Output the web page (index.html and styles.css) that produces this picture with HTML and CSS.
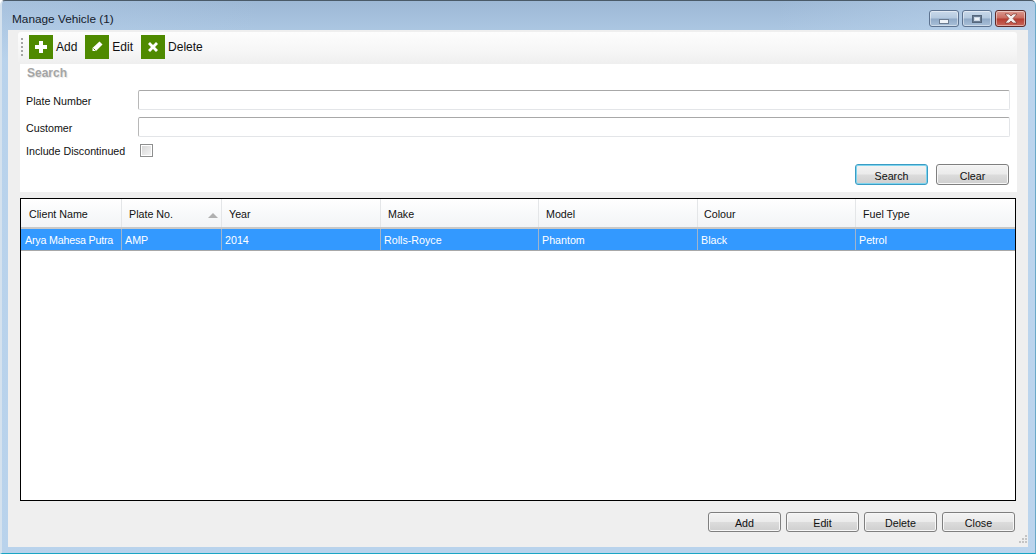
FILE: index.html
```html
<!DOCTYPE html>
<html lang="en">
<head>
<meta charset="utf-8">
<title>Manage Vehicle (1)</title>
<link rel="stylesheet" href="styles.css">
</head>
<body>
<div class="window">
  <header class="titlebar">
    <div class="title">Manage Vehicle (1)</div>
    <div class="caption">
      <button class="cap"><svg width="16" height="14" viewBox="0 0 16 14"><rect x="3.500" y="7.500" width="9" height="4" fill="#eef3f8" stroke="#6a7b90"/></svg></button>
      <button class="cap"><svg width="14" height="12" viewBox="0 0 14 12"><rect x="2.500" y="2.500" width="9" height="7" fill="#cdd9e6" stroke="#55677c"/><rect x="3.500" y="3.500" width="7" height="5" fill="none" stroke="#6a7c92"/><rect x="5" y="5" width="4" height="2" fill="#eef3f8"/></svg></button>
      <button class="cap close"><svg width="18" height="11" viewBox="0 0 18 11"><path d="M3 1h4l2 2 2-2h4l-4 4.500 4 4.500h-4l-2-2-2 2H3l4-4.500z" fill="#f4efee" stroke="#6e2a22" stroke-width=".6"/></svg></button>
    </div>
  </header>
  <div class="client">
    <div class="toolbar">
      <div class="grip"></div>
      <div class="tool"><span class="ticon"><svg width="14" height="14" viewBox="0 0 14 14"><path d="M5 1h4v4h4v4H9v4H5V9H1V5h4z" fill="#fff"/></svg></span>Add</div>
      <div class="tool"><span class="ticon"><svg width="14" height="14" viewBox="0 0 14 14"><path d="M9.500 1.500l3 3L6 11H2.500V8z" fill="#fff"/><path d="M3.500 8.500l2 2" stroke="#4f8a00"/></svg></span>Edit</div>
      <div class="tool"><span class="ticon"><svg width="14" height="14" viewBox="0 0 14 14"><path d="M4 2l3 3 3-3 2 2-3 3 3 3-2 2-3-3-3 3-2-2 3-3-3-3z" fill="#fff"/></svg></span>Delete</div>
    </div>
    <section class="search">
      <div class="legend">Search</div>
      <div class="row row-plate"><label class="lbl">Plate Number</label><div class="input"></div></div>
      <div class="row row-cust"><label class="lbl">Customer</label><div class="input"></div></div>
      <div class="row row-chk"><label class="lbl">Include Discontinued</label><span class="check"></span></div>
      <div class="search-actions">
        <button class="btn focus">Search</button>
        <button class="btn">Clear</button>
      </div>
    </section>
    <section class="grid">
      <div class="thead">
        <div class="th c1">Client Name</div>
        <div class="th c2">Plate No.<i class="sort"></i></div>
        <div class="th c3">Year</div>
        <div class="th c4">Make</div>
        <div class="th c5">Model</div>
        <div class="th c6">Colour</div>
        <div class="th c7">Fuel Type</div>
      </div>
      <div class="tr">
        <div class="td c1">Arya Mahesa Putra</div>
        <div class="td c2">AMP</div>
        <div class="td c3">2014</div>
        <div class="td c4">Rolls-Royce</div>
        <div class="td c5">Phantom</div>
        <div class="td c6">Black</div>
        <div class="td c7">Petrol</div>
      </div>
    </section>
    <footer class="actions">
      <button class="btn wide">Add</button>
      <button class="btn wide">Edit</button>
      <button class="btn wide">Delete</button>
      <button class="btn wide">Close</button>
      <svg class="resize" width="10" height="10" viewBox="0 0 10 10"><path d="M8 0h2v2H8zM5 3h2v2H5zM8 3h2v2H8zM2 6h2v2H2zM5 6h2v2H5zM8 6h2v2H8z" fill="#c4c4c4"/></svg>
    </footer>
  </div>
</div>
</body>
</html>
```
FILE: styles.css
```css
* { box-sizing: border-box; }
html, body { margin: 0; padding: 0; }
body {
  width: 1036px; height: 555px; overflow: hidden; background: #fff;
  font-family: "Liberation Sans", Arial, sans-serif; font-size: 10.7px; color: #111;
}
.window {
  width: 1036px; height: 554px; display: flex; flex-direction: column;
  border: 1px solid #4a5a68; border-left: 2px solid #d5e2ee; border-right-color: #6aa9c8; border-bottom-color: #1aa5c4;
  border-radius: 5px 5px 0 0;
  padding: 0 7px 6px 6px;
  background:
    linear-gradient(90deg, rgba(185,210,235,.35) 0%, rgba(160,186,214,0) 25%, rgba(160,186,214,0) 75%, rgba(190,214,238,.6) 100%),
    linear-gradient(#9db8d5 0, #a8c3df 22px, #b9d3ec 60px);
}
.titlebar { height: 29px; display: flex; justify-content: space-between; flex: none; }
.title { padding: 7px 0 0 4px; font-size: 11.8px; color: #14202c; line-height: 22px; height: 29px; }
.caption { display: flex; gap: 3px; padding: 9px 2px 0 0; height: 27px; }
.cap {
  width: 30px; height: 17px; padding: 0; display: flex; align-items: center; justify-content: center;
  border: 1px solid #5d7390; border-radius: 3px;
  background: linear-gradient(#c9d9ea 0%, #b4c9df 48%, #8fa9c6 52%, #a9c0d8 100%);
  box-shadow: inset 0 0 0 1px rgba(255,255,255,.45);
}
.close {
  width: 31px; border-color: #5e2a28;
  background: linear-gradient(#dc9a90 0%, #c96a5e 48%, #b53c30 52%, #c9675a 100%);
}
.client {
  flex: 1; background: #efefef; display: flex; flex-direction: column;
  padding: 2px 11px 0 10px; min-height: 0;
}
.toolbar {
  height: 32px; flex: none; display: flex; align-items: center; gap: 8px; padding: 0 0 2px 3px;
  background: linear-gradient(#fdfdfd, #f6f6f6 60%, #efefef);
  border-radius: 3px 3px 0 0;
  font-size: 12px;
}
.grip { width: 2px; height: 19px; background: repeating-linear-gradient(#a5a5a5 0 2px, transparent 2px 4px); margin-right: -2px; }
.tool { display: flex; align-items: center; gap: 3px; color: #111; }
.ticon { width: 24px; height: 24px; background: #4f8a00; display: flex; align-items: center; justify-content: center; }
.search { height: 128px; flex: none; margin-left: 2px; background: #fff; position: relative; display: flex; flex-direction: column; }
.legend { padding: 3px 0 0 7px; height: 26px; font-weight: bold; color: #a5a5a5; font-size: 12px; line-height: 12px; text-shadow: 1px 1px 1px #e4e4e4; }
.row { display: flex; align-items: center; padding-left: 6px; }
.lbl { width: 112px; flex: none; white-space: nowrap; padding-top: 2px; }
.input { width: 872px; height: 20px; background: #fff; border: 1px solid #e3e5e8; border-top-color: #a8a8a8; border-left-color: #b8b8b8; border-radius: 2px; }
.row-cust { margin-top: 7px; }
.row-chk { margin-top: 6px; height: 14px; }
.check {
  width: 13px; height: 13px; margin-left: 2px; border: 1px solid #8e8f8f;
  background: linear-gradient(135deg, #d4d4d4, #f6f6f6); box-shadow: inset 0 0 0 1px #fff;
}
.search-actions { display: flex; justify-content: flex-end; gap: 8px; padding: 7px 8px 0 0; }
.btn {
  width: 73px; height: 21px; padding: 2px 0 0; font: inherit; color: #111;
  border: 1px solid #7f7f7f; border-radius: 3px;
  background: linear-gradient(#f3f3f3 0%, #ebebeb 48%, #dcdcdc 52%, #cfcfcf 100%);
  box-shadow: inset 0 0 0 1px #f7f7f7;
}
.focus { border-color: #3a9cc4; box-shadow: inset 0 0 0 1px #7fd4ee; }
.grid {
  height: 303px; flex: none; margin: 6px 1px 0 2px; background: #fff;
  border: 1px solid #000; display: flex; flex-direction: column;
}
.thead { display: flex; height: 30px; flex: none; background: linear-gradient(#fff, #f2f4f6); border-bottom: 2px solid #c8c8c8; }
.tr { display: flex; height: 22px; flex: none; background: #3399ff; color: #fff; border-bottom: 1px solid #a8a8a8; }
.th { padding: 0 0 0 7px; line-height: 30px; border-right: 1px solid #e4e6e8; position: relative; white-space: nowrap; }
.td { padding-left: 3px; line-height: 23px; border-right: 1px solid #a0b4cc; white-space: nowrap; overflow: hidden; }
.th.c1 { padding-left: 8px; }
.td.c1 { padding-left: 4px; letter-spacing: -.2px; }
.th.c6 { padding-left: 6px; }
.c1 { width: 101px; }
.c2 { width: 100px; }
.c3 { width: 159px; }
.c4 { width: 158px; }
.c5 { width: 159px; }
.c6 { width: 158px; }
.c7 { flex: 1; border-right: 0; }
.sort {
  position: absolute; right: 3px; top: 14px; width: 0; height: 0;
  border-left: 5px solid transparent; border-right: 5px solid transparent; border-bottom: 5px solid #b0b0b0;
}
.actions { display: flex; justify-content: flex-end; gap: 5px; padding: 11px 2px 0 0; position: relative; flex: 1; }
.wide { width: 73px; height: 20px; }
.resize { position: absolute; right: -10px; bottom: 2px; }
```
